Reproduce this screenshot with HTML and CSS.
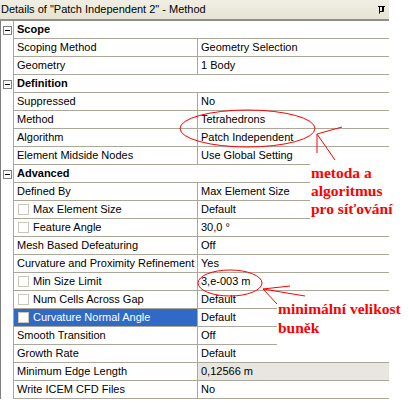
FILE: index.html
```html
<!DOCTYPE html>
<html>
<head>
<meta charset="utf-8">
<link rel="stylesheet" href="styles.css">
</head>
<body>
<div class="panel">
  <div class="title">
    <span class="title-text">Details of "Patch Independent 2" - Method</span>
    <svg class="pin" width="7" height="9" viewBox="0 0 7 9"><path d="M0 1.5H7M1.5 1.5V6.5H5.5V1.5M4.5 1.5V6.5M1.5 6.5V8.5" stroke="#000" stroke-width="1" fill="none"/></svg>
  </div>
  <div class="table">
    <div class="row"><div class="gut"><span class="tog"></span></div><div class="hd">Scope</div></div>
    <div class="row"><div class="gut"></div><div class="name">Scoping Method</div><div class="val">Geometry Selection</div></div>
    <div class="row"><div class="gut"></div><div class="name">Geometry</div><div class="val">1 Body</div></div>
    <div class="row"><div class="gut"><span class="tog"></span></div><div class="hd">Definition</div></div>
    <div class="row"><div class="gut"></div><div class="name">Suppressed</div><div class="val">No</div></div>
    <div class="row"><div class="gut"></div><div class="name">Method</div><div class="val">Tetrahedrons</div></div>
    <div class="row"><div class="gut"></div><div class="name">Algorithm</div><div class="val">Patch Independent</div></div>
    <div class="row"><div class="gut"></div><div class="name">Element Midside Nodes</div><div class="val">Use Global Setting</div></div>
    <div class="row"><div class="gut"><span class="tog"></span></div><div class="hd">Advanced</div></div>
    <div class="row"><div class="gut"></div><div class="name">Defined By</div><div class="val">Max Element Size</div></div>
    <div class="row"><div class="gut"></div><div class="name"><span class="cb"></span>Max Element Size</div><div class="val">Default</div></div>
    <div class="row"><div class="gut"></div><div class="name"><span class="cb"></span>Feature Angle</div><div class="val">30,0 °</div></div>
    <div class="row"><div class="gut"></div><div class="name">Mesh Based Defeaturing</div><div class="val">Off</div></div>
    <div class="row"><div class="gut"></div><div class="name">Curvature and Proximity Refinement</div><div class="val">Yes</div></div>
    <div class="row"><div class="gut"></div><div class="name"><span class="cb"></span>Min Size Limit</div><div class="val">3,e-003 m</div></div>
    <div class="row"><div class="gut"></div><div class="name"><span class="cb"></span>Num Cells Across Gap</div><div class="val">Default</div></div>
    <div class="row"><div class="gut"></div><div class="name sel"><span class="cb"></span>Curvature Normal Angle</div><div class="val">Default</div></div>
    <div class="row"><div class="gut"></div><div class="name">Smooth Transition</div><div class="val">Off</div></div>
    <div class="row"><div class="gut"></div><div class="name">Growth Rate</div><div class="val">Default</div></div>
    <div class="row"><div class="gut"></div><div class="name">Minimum Edge Length</div><div class="val ro">0,12566 m</div></div>
    <div class="row"><div class="gut"></div><div class="name">Write ICEM CFD Files</div><div class="val">No</div></div>
  </div>

  <div class="note note-1">metoda a<br>algoritmus<br>pro síťování</div>
  <div class="note note-2">minimální velikost<br>buněk</div>

  <svg class="marks" width="409" height="407" viewBox="0 0 409 407">
    <g fill="none" stroke="#f00" stroke-width="1">
      <ellipse cx="247.5" cy="128.5" rx="67.5" ry="18.5"/>
      <path d="M317 134 L342 127 M317 134 L317 153 M317 134 L335 160"/>
      <ellipse cx="230" cy="283" rx="32" ry="13"/>
      <path d="M263 289 L290 286 M263 289 L305 296 M263 289 L277 304"/>
    </g>
  </svg>
</div>
</body>
</html>
```

FILE: styles.css
```css
* { box-sizing: border-box; }

body {
  margin: 0;
  background: #fff;
  font-family: "Liberation Sans", Arial, sans-serif;
  font-size: 11px;
  color: #000;
}

.panel {
  position: relative;
  width: 409px;
  height: 407px;
}

.title {
  width: 389px;
  height: 21px;
  background: linear-gradient(#f1efe4, #e6e3d4);
  border-bottom: 2px solid #8f8e87;
  display: flex;
  align-items: center;
  justify-content: space-between;
  padding: 0 4px 0 1px;
}

.title-text {
  line-height: 19px;
}

.pin {
  display: block;
}

.table {
  width: 389px;
  border-left: 1px solid #808080;
}

.row {
  display: flex;
  height: 18px;
}

.gut {
  width: 13px;
  flex: none;
  border-right: 1px solid #aca899;
  display: flex;
  align-items: center;
  padding-left: 2px;
}

.tog {
  width: 9px;
  height: 9px;
  border: 1px solid #808080;
  position: relative;
  background: #fff;
}

.tog::after {
  content: "";
  position: absolute;
  left: 1px;
  top: 3px;
  width: 5px;
  height: 1px;
  background: #000;
}

.hd {
  flex: 1;
  font-weight: bold;
  padding-left: 3px;
  line-height: 17px;
  border-bottom: 1px solid #aca899;
}

.name {
  width: 184px;
  flex: none;
  padding-left: 3px;
  line-height: 17px;
  border-bottom: 1px solid #aca899;
  border-right: 1px solid #aca899;
  display: flex;
  align-items: center;
  white-space: nowrap;
}

.name.sel {
  background: #316ac5;
  color: #fff;
}

.val {
  flex: 1;
  padding-left: 3px;
  line-height: 17px;
  border-bottom: 1px solid #aca899;
  white-space: nowrap;
}

.val.ro {
  background: #e8e6e0;
}

.cb {
  width: 11px;
  height: 11px;
  border: 1px solid #cac8bb;
  background: #fff;
  margin-left: 1px;
  margin-right: 4px;
  flex: none;
}

.note {
  position: absolute;
  background: #fff;
  color: #f00;
  font-family: "Liberation Serif", "Times New Roman", serif;
  font-weight: bold;
  font-size: 15.5px;
  white-space: nowrap;
}

.note-1 {
  left: 310px;
  top: 164px;
  width: 99px;
  height: 58px;
  line-height: 18px;
  padding: 0 0 0 1px;
}

.note-2 {
  left: 277px;
  top: 298px;
  width: 132px;
  height: 52px;
  line-height: 19px;
  padding: 1px 0 0 1px;
}

.marks {
  position: absolute;
  left: 0;
  top: 0;
  pointer-events: none;
}
```
